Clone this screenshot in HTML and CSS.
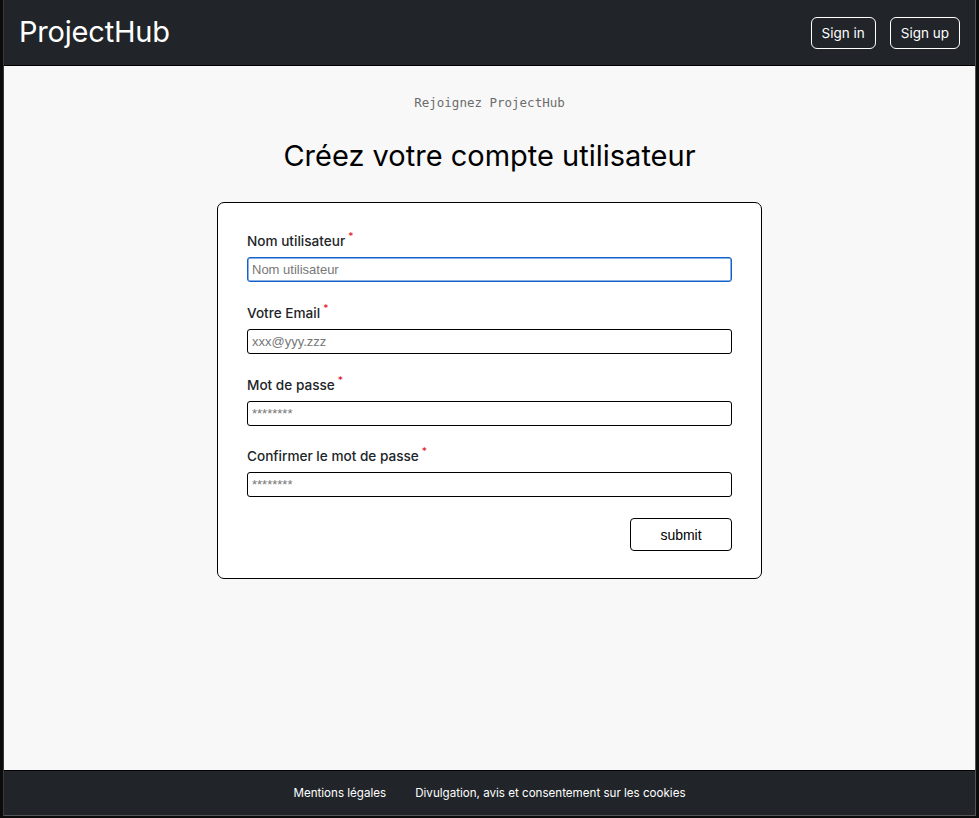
FILE: index.html
```html
<!DOCTYPE html>
<html lang="fr">
<head>
<meta charset="utf-8">
<title>ProjectHub</title>
<link rel="stylesheet" href="styles.css">
</head>
<body>
<div class="frame">
  <header class="topbar">
    <div class="brand">ProjectHub</div>
    <nav class="auth">
      <a class="btn-outline" href="#">Sign in</a>
      <a class="btn-outline" href="#">Sign up</a>
    </nav>
  </header>
  <main class="main">
    <p class="kicker">Rejoignez ProjectHub</p>
    <h1 class="title">Créez votre compte utilisateur</h1>
    <form class="card">
      <div class="field">
        <label class="label">Nom utilisateur<span class="req">*</span></label>
        <input class="input focused" type="text" placeholder="Nom utilisateur">
      </div>
      <div class="field">
        <label class="label">Votre Email<span class="req">*</span></label>
        <input class="input" type="text" placeholder="xxx@yyy.zzz">
      </div>
      <div class="field">
        <label class="label">Mot de passe<span class="req">*</span></label>
        <input class="input" type="text" placeholder="********">
      </div>
      <div class="field">
        <label class="label">Confirmer le mot de passe<span class="req">*</span></label>
        <input class="input" type="text" placeholder="********">
      </div>
      <div class="actions">
        <button class="submit" type="button">submit</button>
      </div>
    </form>
  </main>
  <footer class="footer">
    <a href="#">Mentions légales</a>
    <a href="#">Divulgation, avis et consentement sur les cookies</a>
  </footer>
</div>
</body>
</html>
```

FILE: styles.css
```css
* { box-sizing: border-box; }
html, body { margin: 0; padding: 0; }
body {
  background: #0b0b0b;
  font-family: Inter, "Liberation Sans", sans-serif;
  height: 818px;
  overflow: hidden;
}
.frame {
  margin-left: 3px;
  width: 973px;
  height: 816px;
  border-left: 1px solid #3a3a3a;
  border-right: 1px solid #555;
  border-bottom: 1px solid #555;
  display: flex;
  flex-direction: column;
}
.topbar {
  height: 66px;
  background: #212529;
  border-bottom: 1px solid #000;
  display: flex;
  align-items: center;
  justify-content: space-between;
  padding: 0 15px 0 15px;
}
.brand {
  color: #fff;
  font-size: 29px;
  font-weight: 400;
  letter-spacing: -0.2px;
  margin-top: -2px;
}
.auth { display: flex; gap: 14px; }
.btn-outline {
  display: inline-flex;
  align-items: center;
  justify-content: center;
  height: 32px;
  padding: 0 10px;
  border: 1px solid #fff;
  border-radius: 6px;
  color: #fff;
  text-decoration: none;
  font-size: 13.5px;
}
.main {
  flex: 1;
  background: #f8f8f8;
  display: flex;
  flex-direction: column;
  align-items: center;
  padding-top: 29px;
}
.kicker {
  margin: 0;
  font-family: "DejaVu Sans Mono", monospace;
  font-size: 12.5px;
  color: #6c6c6c;
  line-height: 16px;
}
.title {
  margin: 26px 0 0;
  font-weight: 400;
  font-size: 29px;
  line-height: 38px;
  color: #000;
}
.card {
  margin-top: 27px;
  width: 545px;
  background: #fff;
  border: 1px solid #000;
  border-radius: 7px;
  padding: 23px 29px 27px 29px;
  display: flex;
  flex-direction: column;
}
.field { display: flex; flex-direction: column; margin-bottom: 16px; }
.field:nth-child(3) { margin-bottom: 15px; }
.label {
  font-size: 13.6px;
  font-weight: 500;
  color: #212529;
  line-height: 20px;
  margin-bottom: 6px;
}
.req {
  color: #e0202a;
  font-size: 10px;
  vertical-align: 6px;
  margin-left: 3px;
}
.input {
  height: 25px;
  border: 1px solid #000;
  border-radius: 3px;
  padding: 0 4px;
  font-family: "Liberation Sans", Arial, sans-serif;
  font-size: 13px;
  background: #fff;
  color: #000;
}
.input::placeholder { color: #777; }
.input.focused { border-color: #1560c9; box-shadow: inset 0 0 0 0.5px #1560c9; }
.actions { display: flex; justify-content: flex-end; margin-top: 5px; }
.submit {
  width: 102px;
  height: 33px;
  border: 1px solid #000;
  border-radius: 4px;
  background: #fff;
  font-family: "Liberation Sans", Arial, sans-serif;
  font-size: 14px;
  color: #000;
}
.footer {
  height: 45px;
  background: #212529;
  border-top: 1px solid #000;
  display: flex;
  align-items: center;
  justify-content: center;
  gap: 29px;
}
.footer a {
  color: #fff;
  text-decoration: none;
  font-size: 11.6px;
}
```
